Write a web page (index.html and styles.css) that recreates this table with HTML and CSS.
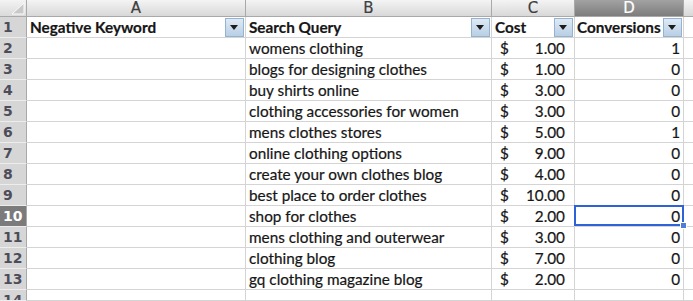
FILE: index.html
```html
<!DOCTYPE html>
<html>
<head>
<meta charset="utf-8">
<link rel="stylesheet" href="styles.css">
</head>
<body>
<div class="sheet">
  <div class="corner"><svg width="26" height="16" viewBox="0 0 26 16"><polygon points="24,3 24,14 12,14" fill="#c9c9c9" stroke="#fafafa" stroke-width="1"/></svg></div>
  <div class="colhdr">A</div>
  <div class="colhdr">B</div>
  <div class="colhdr">C</div>
  <div class="colhdr active">D</div>
  <div class="colhdr last"></div>

  <div class="rowhdr">1</div>
  <div class="cell head"><span>Negative Keyword</span><i class="dd"></i></div>
  <div class="cell head"><span>Search Query</span><i class="dd"></i></div>
  <div class="cell head"><span>Cost</span><i class="dd"></i></div>
  <div class="cell head tight"><span>Conversions</span><i class="dd"></i></div>
  <div class="cell last"></div>

  <div class="rowhdr">2</div><div class="cell"></div><div class="cell">womens clothing</div><div class="cell money"><span>$</span><span>1.00</span></div><div class="cell num">1</div><div class="cell last"></div>
  <div class="rowhdr">3</div><div class="cell"></div><div class="cell">blogs for designing clothes</div><div class="cell money"><span>$</span><span>1.00</span></div><div class="cell num">0</div><div class="cell last"></div>
  <div class="rowhdr">4</div><div class="cell"></div><div class="cell">buy shirts online</div><div class="cell money"><span>$</span><span>3.00</span></div><div class="cell num">0</div><div class="cell last"></div>
  <div class="rowhdr">5</div><div class="cell"></div><div class="cell">clothing accessories for women</div><div class="cell money"><span>$</span><span>3.00</span></div><div class="cell num">0</div><div class="cell last"></div>
  <div class="rowhdr">6</div><div class="cell"></div><div class="cell">mens clothes stores</div><div class="cell money"><span>$</span><span>5.00</span></div><div class="cell num">1</div><div class="cell last"></div>
  <div class="rowhdr">7</div><div class="cell"></div><div class="cell">online clothing options</div><div class="cell money"><span>$</span><span>9.00</span></div><div class="cell num">0</div><div class="cell last"></div>
  <div class="rowhdr">8</div><div class="cell"></div><div class="cell">create your own clothes blog</div><div class="cell money"><span>$</span><span>4.00</span></div><div class="cell num">0</div><div class="cell last"></div>
  <div class="rowhdr">9</div><div class="cell"></div><div class="cell">best place to order clothes</div><div class="cell money"><span>$</span><span>10.00</span></div><div class="cell num">0</div><div class="cell last"></div>
  <div class="rowhdr active">10</div><div class="cell"></div><div class="cell">shop for clothes</div><div class="cell money"><span>$</span><span>2.00</span></div><div class="cell num selected">0<b class="frame"></b><b class="handle"></b></div><div class="cell last"></div>
  <div class="rowhdr">11</div><div class="cell"></div><div class="cell">mens clothing and outerwear</div><div class="cell money"><span>$</span><span>3.00</span></div><div class="cell num">0</div><div class="cell last"></div>
  <div class="rowhdr">12</div><div class="cell"></div><div class="cell">clothing blog</div><div class="cell money"><span>$</span><span>7.00</span></div><div class="cell num">0</div><div class="cell last"></div>
  <div class="rowhdr">13</div><div class="cell"></div><div class="cell">gq clothing magazine blog</div><div class="cell money"><span>$</span><span>2.00</span></div><div class="cell num">0</div><div class="cell last"></div>
  <div class="rowhdr">14</div><div class="cell"></div><div class="cell"></div><div class="cell"></div><div class="cell"></div><div class="cell last"></div>
</div>
</body>
</html>
```
FILE: styles.css
```css
html, body {
  margin: 0;
  padding: 0;
  background: #ffffff;
  overflow: hidden;
}
.sheet {
  display: grid;
  grid-template-columns: 27px 219px 246px 83px 109px 1fr;
  grid-template-rows: 17px repeat(13, 21px) 11px;
  width: 693px;
  height: 301px;
  overflow: hidden;
  font-family: "Lato", "Liberation Sans", sans-serif;
  font-size: 15.3px;
  color: #161616;
  -webkit-text-stroke: 0.2px #161616;
}
.corner {
  background: linear-gradient(#f3f3f3, #dadada);
  border-right: 1px solid #a9a9a9;
  border-bottom: 1px solid #a9a9a9;
  box-sizing: border-box;
}
.corner svg { display: block; }
.colhdr {
  box-sizing: border-box;
  background: linear-gradient(#f4f4f4, #d8d8d8);
  border-right: 1px solid #a9a9a9;
  border-bottom: 1px solid #a9a9a9;
  text-align: center;
  font-family: "DejaVu Sans", sans-serif;
  font-size: 15px;
  line-height: 16px;
  color: #404040;
  -webkit-text-stroke: 0.2px #404040;
}
.colhdr.active {
  background: linear-gradient(#a2a2a2, #7d7d7d);
  color: #ffffff;
  -webkit-text-stroke: 0.2px #ffffff;
}
.colhdr.last { border-right: none; }
.rowhdr {
  box-sizing: border-box;
  background: #d6d6d6;
  border-right: 1px solid #a9a9a9;
  border-bottom: 1px solid #ededed;
  font-family: "DejaVu Sans", sans-serif;
  font-weight: bold;
  font-size: 14px;
  line-height: 20px;
  padding-left: 3px;
  color: #4d4d5a;
  -webkit-text-stroke: 0;
  overflow: hidden;
}
.rowhdr.active {
  background: #7b7b7b;
  color: #ffffff;
}
.cell {
  box-sizing: border-box;
  border-right: 1px solid #d4d4d4;
  border-bottom: 1px solid #d4d4d4;
  padding: 0 3px;
  line-height: 20px;
  white-space: nowrap;
  overflow: hidden;
  position: relative;
}
.cell.last { border-right: none; }
.head {
  display: flex;
  align-items: center;
  justify-content: space-between;
  font-weight: bold;
  padding-right: 1px;
}
.head.tight { padding-left: 2px; }
.dd {
  flex: none;
  width: 17px;
  height: 17px;
  border: 1px solid #93b3d0;
  background: linear-gradient(#dfeaf5, #b8cfe5);
  position: relative;
}
.dd::after {
  content: "";
  position: absolute;
  left: 4px;
  top: 6px;
  border-left: 4.5px solid transparent;
  border-right: 4.5px solid transparent;
  border-top: 5px solid #1c1c1c;
}
.money {
  display: flex;
  justify-content: space-between;
  padding: 0 9px 0 8px;
}
.num {
  text-align: right;
  padding-right: 3px;
}
.selected {
  overflow: visible;
  z-index: 2;
}
.frame {
  position: absolute;
  left: -1px;
  top: -1px;
  right: -1px;
  bottom: 0;
  border: 2px solid #2e62d6;
}
.handle {
  position: absolute;
  right: -4px;
  bottom: -3px;
  width: 5px;
  height: 5px;
  background: #4d7fd8;
  border: 1px solid #ffffff;
}
```
